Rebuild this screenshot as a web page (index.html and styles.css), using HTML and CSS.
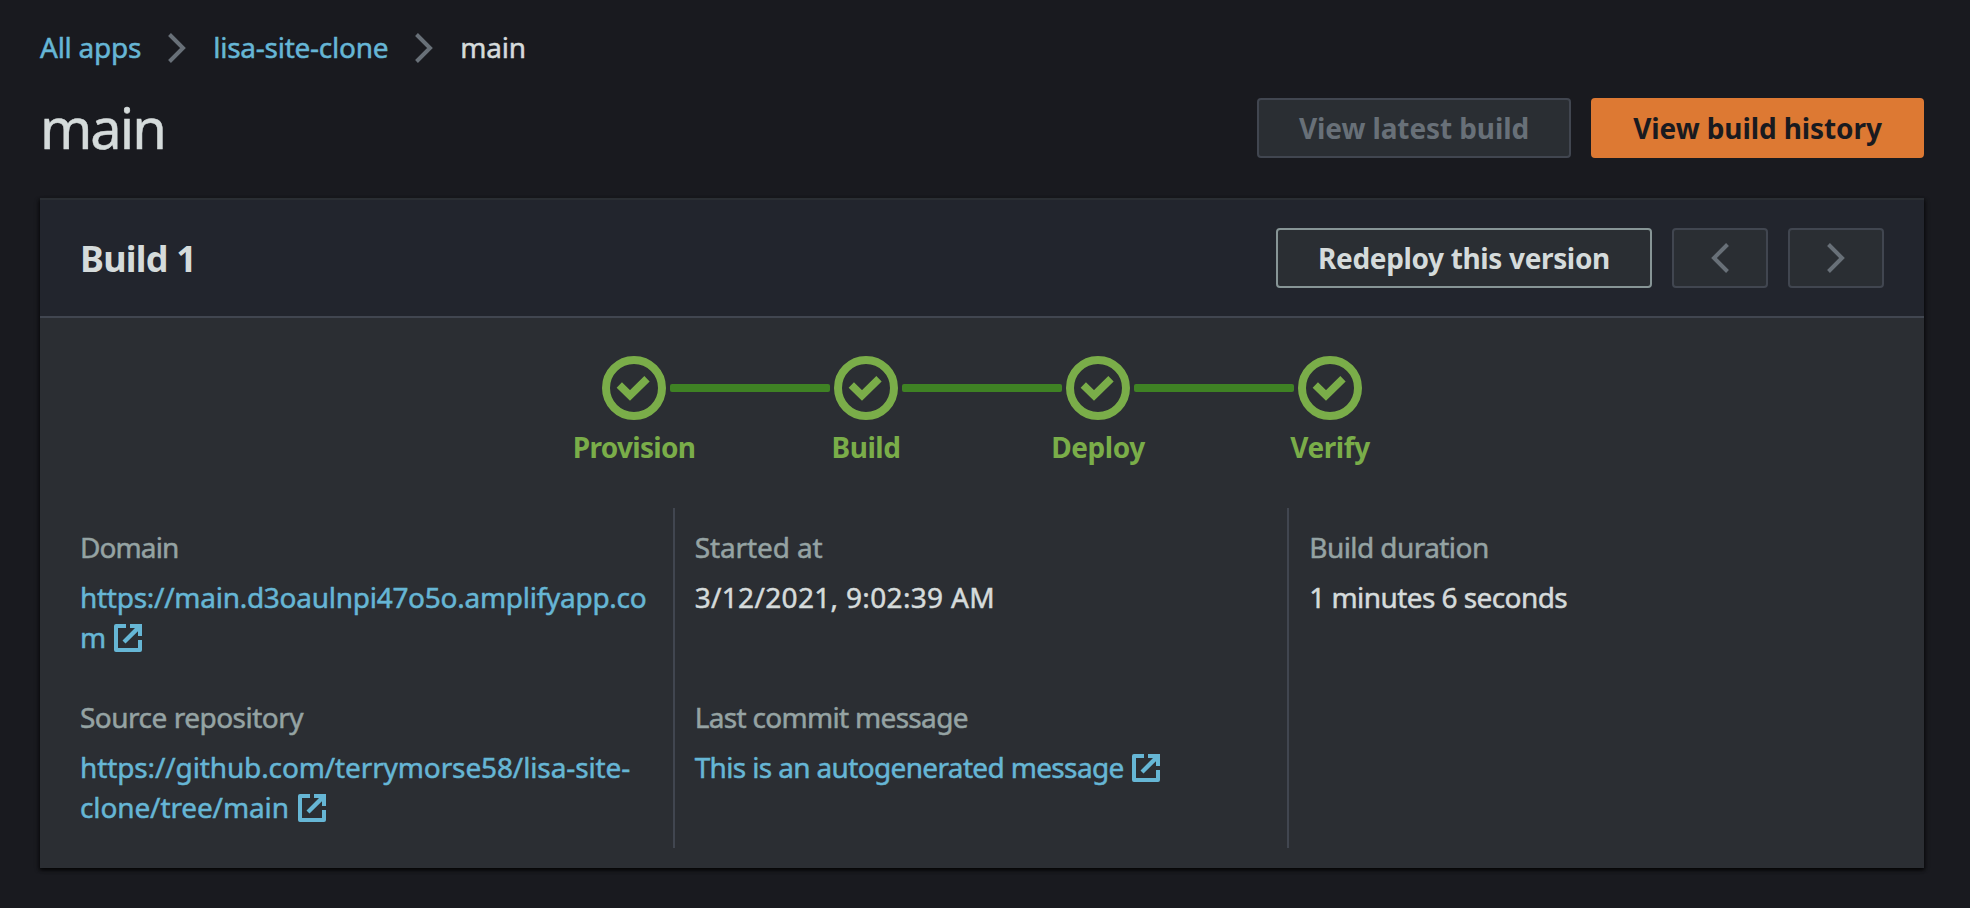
FILE: index.html
```html
<!DOCTYPE html>
<html lang="en">
<head>
<meta charset="utf-8">
<title>main</title>
<link rel="stylesheet" href="styles.css">
</head>
<body>
<svg class="defs" aria-hidden="true">
  <symbol id="chevron" viewBox="0 0 18 30"><path d="M1.5 1.5 L15 15 L1.5 28.5" fill="none" stroke="currentColor" stroke-width="4"/></symbol>
  <symbol id="check" viewBox="0 0 64 64"><circle cx="32" cy="32" r="28" fill="none" stroke="currentColor" stroke-width="8"/><path d="M17.3 29 L28 39.5 L45 22.8" fill="none" stroke="currentColor" stroke-width="7.6"/></symbol>
  <symbol id="external" viewBox="0 0 28 28"><path d="M12 2 H2 V26 H26 V16" fill="none" stroke="currentColor" stroke-width="4" stroke-linejoin="round"/><path d="M16 0 H28 V12 H24 V7.2 L11.5 19.5 L8.5 16.5 L21 4 H16 Z" fill="currentColor"/></symbol>
</svg>
<nav class="breadcrumbs">
  <a class="link" href="#">All apps</a>
  <svg class="chevron"><use href="#chevron"/></svg>
  <a class="link" href="#">lisa-site-clone</a>
  <svg class="chevron"><use href="#chevron"/></svg>
  <span>main</span>
</nav>
<header class="page-header">
  <h1>main</h1>
  <div class="actions">
    <button class="btn btn-disabled btn-latest" disabled>View latest build</button>
    <button class="btn btn-primary">View build history</button>
  </div>
</header>
<section class="card">
  <header class="card-header">
    <h2>Build 1</h2>
    <div class="actions">
      <button class="btn btn-redeploy">Redeploy this version</button>
      <button class="btn btn-disabled btn-icon" aria-label="Previous" disabled><svg class="chevron flip"><use href="#chevron"/></svg></button>
      <button class="btn btn-disabled btn-icon" aria-label="Next" disabled><svg class="chevron"><use href="#chevron"/></svg></button>
    </div>
  </header>
  <div class="steps">
    <div class="step provision"><svg><use href="#check"/></svg><span>Provision</span></div>
    <div class="bar"></div>
    <div class="step"><svg><use href="#check"/></svg><span>Build</span></div>
    <div class="bar"></div>
    <div class="step"><svg><use href="#check"/></svg><span>Deploy</span></div>
    <div class="bar"></div>
    <div class="step"><svg><use href="#check"/></svg><span>Verify</span></div>
  </div>
  <div class="details">
    <dl class="column">
      <div class="item">
        <dt class="domain">Domain</dt>
        <dd><a class="link url" href="#">https://main.d3oaulnpi47o5o.amplifyapp.co<br>m<svg class="external"><use href="#external"/></svg></a></dd>
      </div>
      <div class="item">
        <dt class="source">Source repository</dt>
        <dd><a class="link repo" href="#">https://github.com/terrymorse58/lisa-site-<br>clone/tree/main<svg class="external wide"><use href="#external"/></svg></a></dd>
      </div>
    </dl>
    <dl class="column">
      <div class="item">
        <dt class="started">Started at</dt>
        <dd class="date">3/12/2021, 9:02:39 AM</dd>
      </div>
      <div class="item">
        <dt class="commit">Last commit message</dt>
        <dd><a class="link message" href="#">This is an autogenerated message<svg class="external"><use href="#external"/></svg></a></dd>
      </div>
    </dl>
    <dl class="column">
      <div class="item">
        <dt class="duration">Build duration</dt>
        <dd class="duration">1 minutes 6 seconds</dd>
      </div>
    </dl>
  </div>
</section>
</body>
</html>
```
FILE: styles.css
```css
* { box-sizing: border-box; }

body {
  margin: 0;
  padding: 28px 46px 39px 40px;
  background: #191a1f;
  color: #d5dbdb;
  font: 400 28px/40px "Noto Sans", sans-serif;
  -webkit-text-stroke: 0.5px currentColor;
}

h1, h2, dl, dt, dd { margin: 0; }
.defs { position: absolute; width: 0; height: 0; }

.link {
  color: #66b6d5;
  text-decoration: none;
}

.chevron {
  display: block;
  flex: none;
  width: 18px;
  height: 30px;
  color: #687078;
}
.flip { transform: scaleX(-1); }

.breadcrumbs {
  display: flex;
  align-items: center;
  gap: 27px;
  height: 40px;
  letter-spacing: -0.25px;
}
.breadcrumbs a,
.breadcrumbs span { padding-bottom: 2px; }

.page-header {
  display: flex;
  justify-content: space-between;
  align-items: center;
  height: 60px;
  margin-top: 30px;
}

h1 {
  padding-bottom: 3px;
  font-size: 56px;
  font-weight: 400;
  line-height: 60px;
  letter-spacing: -2px;
}

.actions {
  display: flex;
  gap: 20px;
}

.btn {
  display: flex;
  align-items: center;
  justify-content: center;
  height: 60px;
  padding: 0;
  border: 2px solid #879596;
  border-radius: 4px;
  background: #2a2e33;
  color: #d5dbdb;
  font: 700 28px/40px "Noto Sans", sans-serif;
  letter-spacing: -0.1px;
  white-space: nowrap;
  -webkit-text-stroke: 0;
}
.btn-disabled {
  border-color: #414650;
  color: #687078;
}
.btn-latest { width: 314px; }
.btn-primary {
  width: 333px;
  border-color: #dd7933;
  background: #dd7933;
  color: #191a1f;
}
.btn-redeploy {
  width: 376px;
  letter-spacing: -0.35px;
}
.btn-icon { width: 96px; }

.card {
  height: 670px;
  margin-top: 40px;
  border-top: 2px solid #2a2e33;
  background: #2b2e33;
  box-shadow: 0 2px 3px rgba(0, 0, 0, 0.6), 2px 2px 4px rgba(0, 0, 0, 0.3), -2px 2px 4px rgba(0, 0, 0, 0.3);
}

.card-header {
  display: flex;
  justify-content: space-between;
  align-items: center;
  height: 118px;
  padding: 0 40px;
  border-bottom: 2px solid #414650;
  background: #22252d;
}

h2 {
  padding-top: 2px;
  font-size: 36px;
  line-height: 44px;
  letter-spacing: -0.8px;
  -webkit-text-stroke: 0;
}

.steps {
  display: flex;
  justify-content: center;
  height: 190px;
  padding-top: 38px;
}
.step {
  display: flex;
  flex-direction: column;
  align-items: center;
  gap: 7px;
  width: 64px;
  color: #7aad49;
  font-weight: 700;
  letter-spacing: -0.45px;
  white-space: nowrap;
  -webkit-text-stroke: 0;
}
.provision { letter-spacing: -0.7px; }
.step svg {
  flex: none;
  width: 64px;
  height: 64px;
}
.bar {
  width: 160px;
  height: 8px;
  margin: 28px 4px 0;
  border-radius: 2px;
  background: #3f8224;
}

.details {
  display: grid;
  grid-template-columns: repeat(3, 1fr);
  height: 340px;
  margin: 0 20px;
}
.column {
  display: flex;
  flex-direction: column;
  gap: 40px;
  padding: 19px 18px 0 20px;
  border-right: 2px solid #414650;
  white-space: nowrap;
}
.column:last-child { border-right: 0; }
.item { height: 130px; }
dt {
  margin-bottom: 10px;
  color: #95a3a3;
}
.domain { letter-spacing: -0.9px; }
.source { letter-spacing: -0.5px; }
.started { letter-spacing: -0.1px; }
.url { letter-spacing: -0.27px; }
.repo { letter-spacing: -0.12px; }
.date { letter-spacing: 0.33px; }
.commit { letter-spacing: -0.68px; }
.message { letter-spacing: -0.65px; }
.duration { letter-spacing: -0.57px; }

.external {
  width: 28px;
  height: 28px;
  margin-left: 8px;
  vertical-align: -4px;
}
.wide { margin-left: 9px; }
```
